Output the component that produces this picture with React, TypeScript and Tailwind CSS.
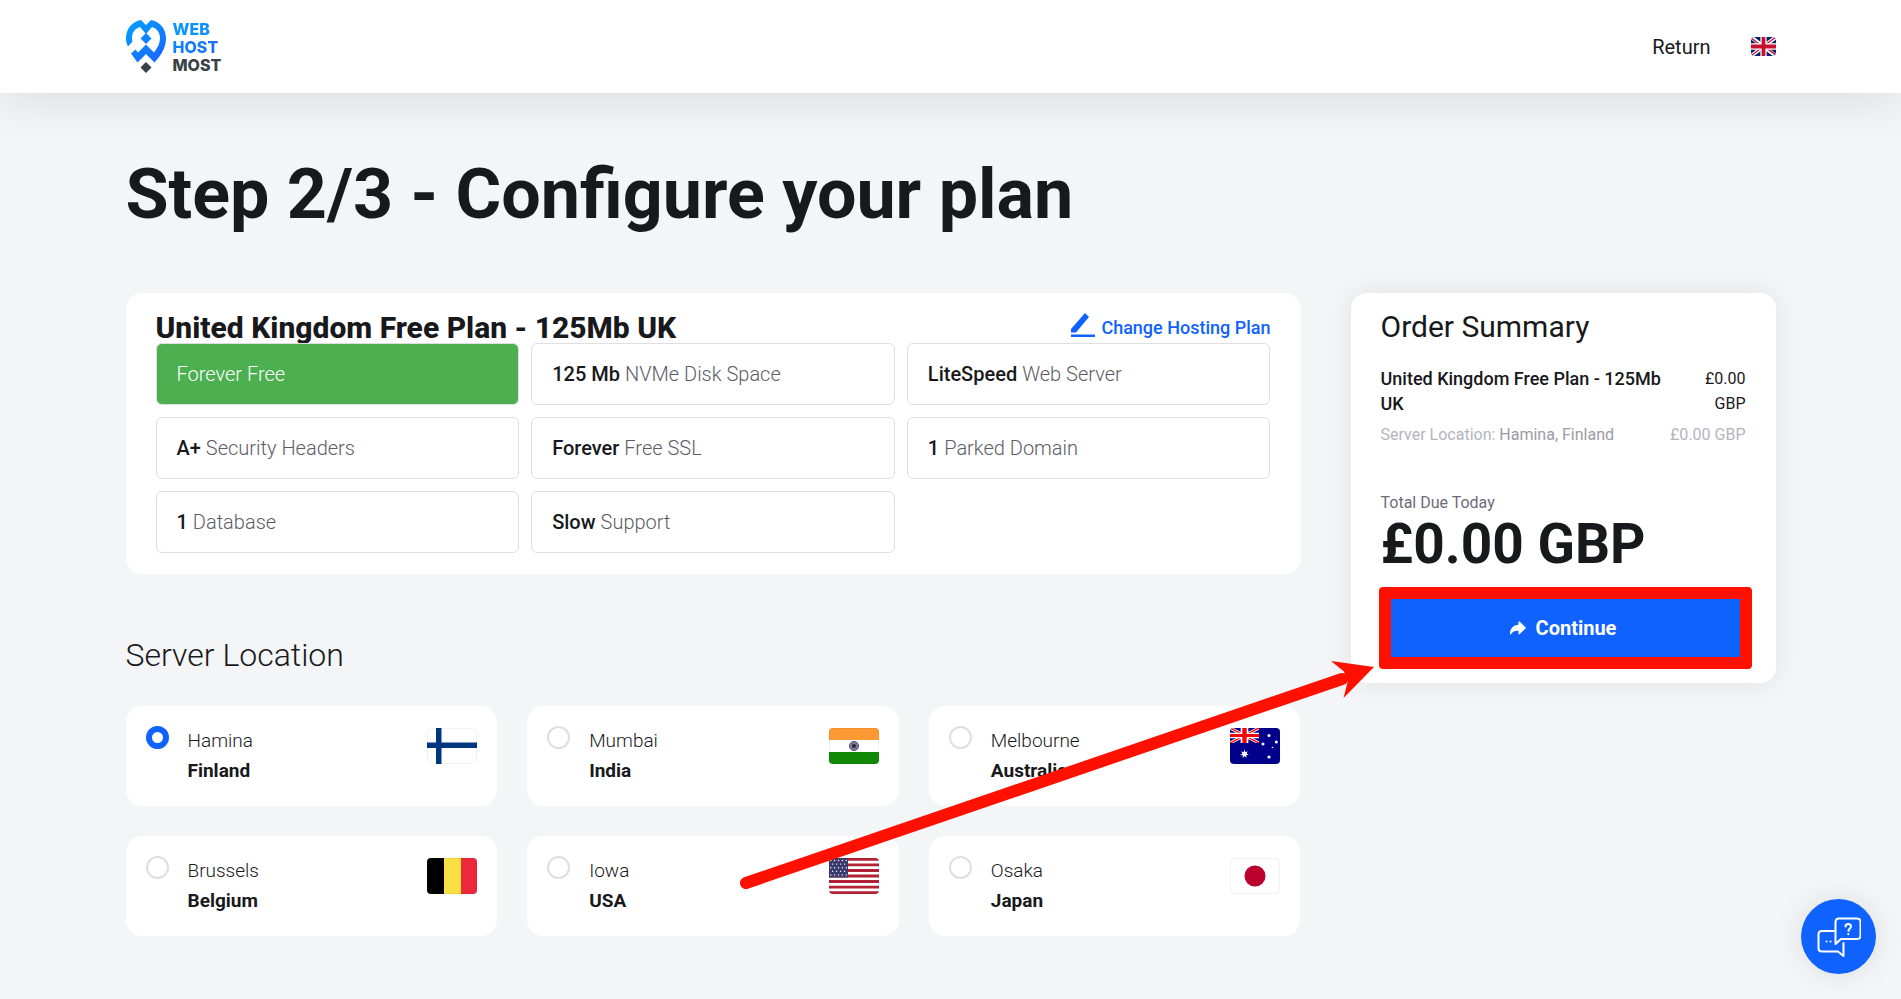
import { ReactNode, useState } from "react";
import clsx from "clsx";

type Feature = {
  strong?: string;
  text: string;
  highlight?: boolean;
};

type Location = {
  city: string;
  country: string;
  flag: ReactNode;
};

const features: Feature[] = [
  { text: "Forever Free", highlight: true },
  { strong: "125 Mb", text: "NVMe Disk Space" },
  { strong: "LiteSpeed", text: "Web Server" },
  { strong: "A+", text: "Security Headers" },
  { strong: "Forever", text: "Free SSL" },
  { strong: "1", text: "Parked Domain" },
  { strong: "1", text: "Database" },
  { strong: "Slow", text: "Support" },
];

function UnionJack() {
  return (
    <>
      <path fill="#012169" d="M0 0h60v45H0z" />
      <path stroke="#fff" strokeWidth="9" d="M0 0l60 45M60 0L0 45" />
      <path stroke="#c8102e" strokeWidth="3" d="M0 2l28 21M60 0L32 20M0 45l26-20M60 43L34 24" />
      <path stroke="#fff" strokeWidth="15" d="M30 0v45M0 22.500h60" />
      <path stroke="#c8102e" strokeWidth="9" d="M30 0v45M0 22.500h60" />
    </>
  );
}

const finland = (
  <>
    <path fill="#fff" d="M0 0h50v36H0z" />
    <path fill="#003580" d="M9 0h5.500v36H9z" />
    <path fill="#003580" d="M0 14.500h50v5.500H0z" />
  </>
);

const india = (
  <>
    <path fill="#fff" d="M0 0h50v36H0z" />
    <path fill="#ff9933" d="M0 0h50v12H0z" />
    <path fill="#128807" d="M0 24h50v12H0z" />
    <circle cx="25" cy="18" r="4.500" fill="#a5a5b4" stroke="#33336e" strokeWidth="0.900" />
    <path
      stroke="#333355"
      strokeWidth="0.500"
      d="M21 18h8M25 14v8M22.200 15.200l5.600 5.600M27.800 15.200l-5.600 5.600M21.400 16.400l7.200 3.200M28.600 16.400l-7.200 3.200M23.400 14.400l3.200 7.200M26.600 14.400l-3.200 7.200"
    />
    <circle cx="25" cy="18" r="1.800" fill="#222233" />
  </>
);

const star = "M0-4.400L.9-1.800 3.400-2.700 2-.5 4.300 1 1.600 1.300 1.900 4 0 2.100-1.900 4-1.600 1.300-4.300 1-2-.5-3.400-2.700-.9-1.800z";

const australia = (
  <>
    <path fill="#00008b" d="M0 0h50v36H0z" />
    <svg width="29" height="15" viewBox="0 0 60 45" preserveAspectRatio="none">
      <path fill="#00008b" d="M0 0h60v45H0z" />
      <path stroke="#fff" strokeWidth="8" d="M0 0l60 45M60 0L0 45" />
      <path stroke="#ff0000" strokeWidth="4" d="M0 0l60 45M60 0L0 45" />
      <path stroke="#fff" strokeWidth="16" d="M30 0v45M0 22.500h60" />
      <path stroke="#ff0000" strokeWidth="9" d="M30 0v45M0 22.500h60" />
    </svg>
    <path fill="#fff" transform="translate(14.500 26)" d={star} />
    <g fill="#fff">
      <circle cx="39" cy="7.500" r="1.500" />
      <circle cx="33" cy="16" r="1.500" />
      <circle cx="46.300" cy="14" r="1.500" />
      <circle cx="42.500" cy="19.500" r="0.800" />
      <circle cx="39" cy="29" r="1.600" />
    </g>
  </>
);

const belgium = (
  <>
    <path fill="#000001" d="M0 0h17v36H0z" />
    <path fill="#fae042" d="M17 0h17v36H17z" />
    <path fill="#ed2939" d="M34 0h16v36H34z" />
  </>
);

const usa = (
  <>
    <path fill="#fff" d="M0 0h50v36H0z" />
    <path
      stroke="#b22234"
      strokeWidth="2.770"
      d="M0 1.400h50M0 6.900h50M0 12.500h50M0 18h50M0 23.500h50M0 29.100h50M0 34.600h50"
    />
    <path fill="#3c3b6e" d="M0 0h19v19.400H0z" />
    {[2.5, 6.1, 9.7, 13.3, 16.9].map((y, row) =>
      (row % 2 ? [3.6, 7.6, 11.6, 15.6] : [1.8, 5.6, 9.5, 13.4, 17.2]).map((x) => (
        <circle key={`${x}-${y}`} cx={x} cy={y} r="0.700" fill="#fff" />
      ))
    )}
  </>
);

const japan = (
  <>
    <path fill="#fff" d="M0 0h50v36H0z" />
    <circle cx="25" cy="18" r="10.500" fill="#bc002d" />
  </>
);

const locations: Location[] = [
  { city: "Hamina", country: "Finland", flag: finland },
  { city: "Mumbai", country: "India", flag: india },
  { city: "Melbourne", country: "Australia", flag: australia },
  { city: "Brussels", country: "Belgium", flag: belgium },
  { city: "Iowa", country: "USA", flag: usa },
  { city: "Osaka", country: "Japan", flag: japan },
];

function Logo() {
  return (
    <a href="#" className="flex items-center gap-[7px]" aria-label="Web Host Most">
      <svg width="40" height="54" viewBox="0 0 40 54" fill="none" aria-hidden="true">
        <defs>
          <linearGradient id="pin" x1="0" y1="0" x2="34" y2="42" gradientUnits="userSpaceOnUse">
            <stop stopColor="#00a2ff" />
            <stop offset="1" stopColor="#1a66ff" />
          </linearGradient>
        </defs>
        <path
          fill="url(#pin)"
          d="M15 0l5 5 5-5c9 1.500 15 9 15 18.500 0 9-5 17-11.500 24L20 34l-8.500 8.500-6.500-9 4.500-4 2.500 3L20 24.500l8 8c3.500-4.500 6-9 6-14.500 0-5.500-3-9.500-8-11l-6 7-6-7c-5 1.500-8 5.500-8 11 0 1.500.2 2.500.5 3.500L2 26.500C.7 24 0 21.500 0 18.500 0 9 6 1.500 15 0z"
        />
        <path fill="url(#pin)" d="M20 13l5.500 5.500L20 24l-5.500-5.500z" />
        <path fill="#3b4144" d="M20 42l5.500 5.500L20 53l-5.500-5.500z" />
      </svg>
      <span className="flex flex-col font-[Inter,sans-serif] text-base leading-[18px] font-extrabold text-[#3b4144]">
        <span className="bg-linear-to-r from-[#0a98ff] to-[#0f86ff] bg-clip-text text-transparent">WEB</span>
        <span className="bg-linear-to-r from-[#0f86ff] to-[#1a6dff] bg-clip-text text-transparent">HOST</span>
        <span>MOST</span>
      </span>
    </a>
  );
}

function Header() {
  return (
    <header className="relative bg-white shadow-[0_15px_40px_rgba(0,0,0,0.08)]">
      <div className="mx-auto flex h-[93px] max-w-[1650px] items-center justify-between">
        <Logo />
        <nav className="flex items-center gap-10">
          <a href="#" className="text-xl">
            Return
          </a>
          <button type="button" aria-label="Language: English">
            <svg width="25" height="19" viewBox="0 0 60 45" preserveAspectRatio="none" className="rounded">
              <UnionJack />
            </svg>
          </button>
        </nav>
      </div>
    </header>
  );
}

function PlanCard() {
  return (
    <section className="rounded-2xl bg-white px-[30px] pt-5 pb-[21px]">
      <div className="flex items-start justify-between leading-[30px]">
        <h2 className="text-3xl leading-[30px] font-extrabold">United Kingdom Free Plan - 125Mb UK</h2>
        <a href="#" className="flex items-start gap-1.5 text-lg leading-[30px] font-medium text-[#1062fe]">
          <svg width="24" height="24" viewBox="0 0 24 24" fill="currentColor" aria-hidden="true">
            <path d="M0 16L14 0l4 4L5 19.500H0zM0 21.500h24V24H0z" />
          </svg>
          Change Hosting Plan
        </a>
      </div>
      <ul className="grid grid-cols-3 gap-3">
        {features.map(({ strong, text, highlight }) => (
          <li
            key={text}
            className={clsx(
              "rounded-md border border-[#dfdfe3] px-5 py-4 text-xl leading-7 font-light",
              highlight ? "bg-[#4caf50] text-white" : "text-[#5c5c66]"
            )}
          >
            {strong && <strong className="font-medium text-[#18191c]">{strong} </strong>}
            {text}
          </li>
        ))}
      </ul>
    </section>
  );
}

function ServerLocation() {
  const [selected, setSelected] = useState("Hamina");

  return (
    <section className="mt-[60px]">
      <h2 className="text-[32px] leading-[42px] font-light">Server Location</h2>
      <div className="mt-[30px] grid grid-cols-3 gap-[30px]">
        {locations.map(({ city, country, flag }) => (
          <label key={city} className="flex h-[100px] items-start rounded-2xl bg-white p-5 text-[19px] leading-[30px]">
            <input
              type="radio"
              name="location"
              checked={selected === city}
              onChange={() => setSelected(city)}
              className="size-[23px] appearance-none rounded-full border-2 border-[#dfdfe3] checked:border-[6px] checked:border-[#1062fe]"
            />
            <span className="ml-[19px] flex flex-1 flex-col font-light">
              {city}
              <strong className="font-bold">{country}</strong>
            </span>
            <svg
              width="50"
              height="36"
              viewBox="0 0 50 36"
              className="mt-0.5 rounded outline-1 -outline-offset-1 outline-black/5"
              aria-hidden="true"
            >
              {flag}
            </svg>
          </label>
        ))}
      </div>
    </section>
  );
}

function OrderSummary() {
  return (
    <aside className="w-[425px] shrink-0 rounded-2xl bg-white px-[30px] pt-[18px] pb-5 shadow-[0_0_30px_rgba(0,0,0,0.08)]">
      <h2 className="text-3xl leading-8">Order Summary</h2>
      <div className="mt-[23px] flex justify-between leading-[25px]">
        <span className="w-[290px] text-lg leading-[25px] font-medium">United Kingdom Free Plan - 125Mb UK</span>
        <span className="w-[60px] text-right">£0.00 GBP</span>
      </div>
      <div className="mt-1.5 flex justify-between leading-[25px] text-[#b4b4be]">
        <span>
          Server Location: <span className="text-[#9b9ba6]">Hamina, Finland</span>
        </span>
        <span>£0.00 GBP</span>
      </div>
      <p className="mt-[43px] leading-[25px] text-[#6c6c78]">Total Due Today</p>
      <p className="text-[55px] leading-[58px] font-bold">£0.00 GBP</p>
      <div className="relative mt-5">
        <button
          type="button"
          className="flex h-[70px] w-full items-center justify-center gap-2.5 rounded-md bg-[#1062fe] text-xl font-bold text-white"
        >
          <svg width="16" height="14" viewBox="0 0 16 14" fill="currentColor" aria-hidden="true">
            <path d="M8.500 1q0-1.200 1-.6l6 5.800q.7.700 0 1.400l-6 5.600q-1 .6-1-.6V9.800C5 9.500 2.500 10.500 1 13.300Q0 13.800 0 12.500C0 7.500 3.500 4 8.500 3.700z" />
          </svg>
          Continue
        </button>
        <div className="pointer-events-none absolute -inset-y-1.5 -right-1.5 -left-0.5 rounded border-12 border-[#ff1000]" />
      </div>
    </aside>
  );
}

function ChatButton() {
  return (
    <button
      type="button"
      aria-label="Open chat"
      className="fixed right-[25px] bottom-[25px] flex size-[75px] items-center justify-center rounded-full bg-[#1062fe] text-white shadow-[0_0_30px_rgba(0,0,0,0.1)]"
    >
      <svg
        width="44"
        height="40"
        viewBox="0 0 44 40"
        fill="none"
        stroke="currentColor"
        strokeWidth="2"
        strokeLinejoin="round"
        strokeLinecap="round"
        aria-hidden="true"
      >
        <path d="M17 14H5q-3.500 0-3.500 3.500v14Q1.500 34.500 5 34.500h16l5.500 4.500V26" />
        <path d="M18.500 27V5q0-3.500 3.500-3.500h18q3.500 0 3.500 3.500v13.500q0 3.500-3.500 3.500H24z" />
        <path d="M28.500 9.500c0-3.500 5.500-3.500 5.500 0 0 2-2.500 2-2.500 4.500" />
        <path d="M31.300 17v.3M9.500 24.500v.1M13.500 24.500v.1" />
      </svg>
    </button>
  );
}

export default function App() {
  return (
    <div className="min-h-screen bg-[#f3f5f7] font-[Roboto,sans-serif] text-[#18191c]">
      <Header />
      <main className="relative mx-auto max-w-[1650px] pt-[60px] pb-[60px]">
        <h1 className="text-[70px] leading-[82px] font-bold">Step 2/3 - Configure your plan</h1>
        <div className="mt-[58px] flex items-start gap-[50px]">
          <div className="min-w-0 flex-1">
            <PlanCard />
            <ServerLocation />
          </div>
          <OrderSummary />
        </div>
        {/* POINTER TO THE CONTINUE BUTTON */}
        <svg
          width="640"
          height="240"
          viewBox="0 0 640 240"
          className="pointer-events-none absolute top-[561px] right-[396px]"
          aria-hidden="true"
        >
          <path stroke="#ff1000" strokeWidth="12" strokeLinecap="round" d="M6 229L602 25" />
          <path fill="#ff1000" d="M634 13L591 7l13 10.500 3.500 11L603.500 44z" />
        </svg>
      </main>
      <ChatButton />
    </div>
  );
}
